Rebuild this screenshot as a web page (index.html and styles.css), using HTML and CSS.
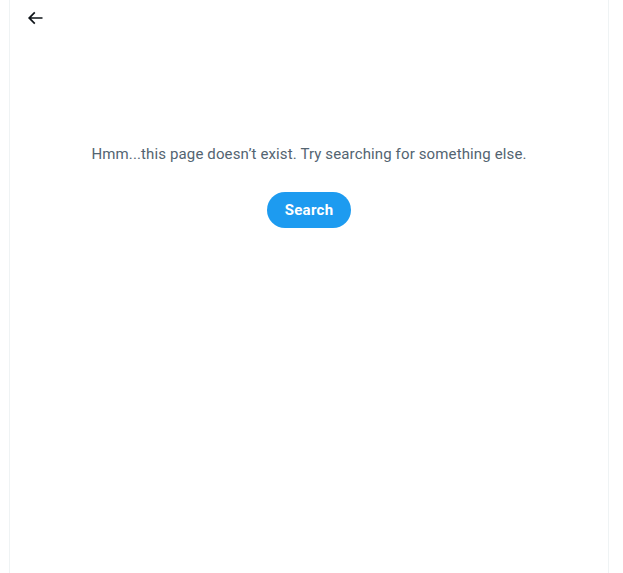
FILE: index.html
```html
<!DOCTYPE html>
<html>
<head>
<meta charset="utf-8">
<link rel="stylesheet" href="styles.css">
</head>
<body>
<main class="column">
  <header class="topbar">
    <button class="back" aria-label="Back">
      <svg viewBox="0 0 24 24" width="20" height="20"><path d="M7.414 13l5.043 5.04-1.414 1.42L3.586 12l7.457-7.46 1.414 1.42L7.414 11H21v2H7.414z"/></svg>
    </button>
  </header>
  <section class="empty">
    <p class="msg">Hmm...this page doesn’t exist. Try searching for something else.</p>
    <button class="search">Search</button>
  </section>
</main>
</body>
</html>
```
FILE: styles.css
```css
html, body {
  margin: 0;
  padding: 0;
  background: #fff;
  height: 100%;
}
body {
  font-family: Roboto, "Liberation Sans", sans-serif;
  overflow: hidden;
}
.column {
  margin-left: 9px;
  width: 598px;
  min-height: 100%;
  border-left: 1px solid #eff3f4;
  border-right: 1px solid #eff3f4;
  box-sizing: content-box;
}
.topbar {
  height: 36px;
  display: flex;
  align-items: center;
  padding-left: 15px;
}
.back {
  width: 20px;
  height: 20px;
  padding: 0;
  border: 0;
  background: none;
  display: flex;
  align-items: center;
  justify-content: center;
  cursor: pointer;
}
.back svg {
  fill: #0f1419;
  display: block;
}
.empty {
  display: flex;
  flex-direction: column;
  align-items: center;
  padding-top: 108px;
}
.msg {
  margin: 0;
  font-size: 15px;
  line-height: 20px;
  letter-spacing: 0.13px;
  color: #536471;
}
.search {
  margin-top: 28px;
  height: 36px;
  padding: 0 18px;
  border: 0;
  border-radius: 18px;
  background: #1d9bf0;
  color: #fff;
  font-family: inherit;
  font-size: 15px;
  font-weight: 700;
  letter-spacing: 0.3px;
  cursor: pointer;
}
```
